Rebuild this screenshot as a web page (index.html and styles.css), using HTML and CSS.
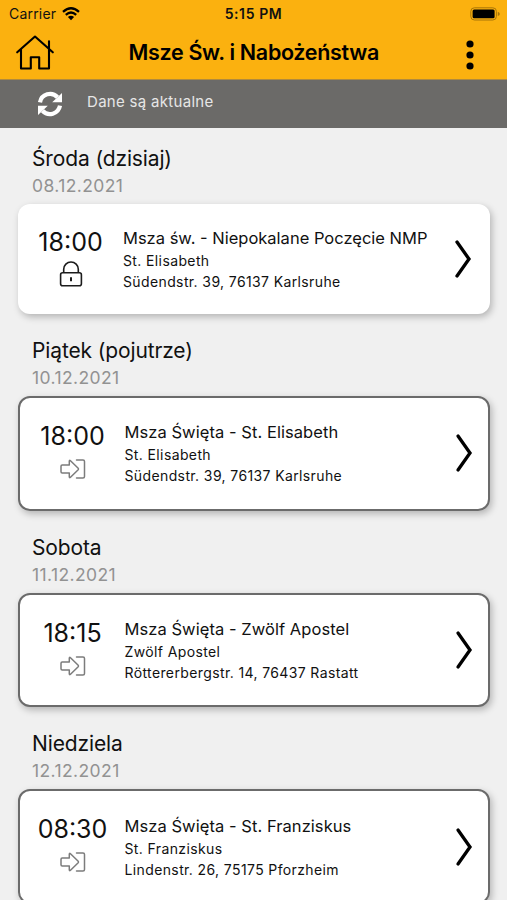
FILE: index.html
```html
<!DOCTYPE html>
<html lang="pl">

<head>
    <meta charset="UTF-8" />
    <meta name="viewport" content="width=device-width, initial-scale=1.0" />
    <title>Msze Św. i Nabożeństwa</title>
    <link rel="stylesheet" href="styles.css">
</head>

<body>
    <svg width="0" height="0" class="sprite">
        <symbol id="chevron" viewBox="0 0 18 40">
            <path d="M3 3 L15 20 L3 37" fill="none" stroke="#000" stroke-width="3.3" stroke-linecap="round" stroke-linejoin="miter" />
        </symbol>
        <symbol id="enter" viewBox="0 0 26 20">
            <path d="M2.2 6 H9.3 V2.2 Q9.3 .7 10.5 1.8 L18.2 9.3 Q18.8 10 18.2 10.7 L10.5 18.2 Q9.3 19.3 9.3 17.8 V14 H2.2 Q1 14 1 12.8 V7.2 Q1 6 2.2 6 Z M16.5 1 H23 Q24.5 1 24.5 2.5 V17.5 Q24.5 19 23 19 H16.5" fill="none" stroke="#7c7c7c" stroke-width="1.5" stroke-linecap="round" stroke-linejoin="round" />
        </symbol>
    </svg>

    <header>
        <div class="status">
            <div class="carrier">
                <span>Carrier</span>
                <svg width="18" height="14" viewBox="0 0 18 14">
                    <path d="M1 4.8 Q9 -2.2 17 4.8 M3.8 7.8 Q9 3.2 14.2 7.8" fill="none" stroke="#000" stroke-width="2.3" />
                    <path d="M5.9 10 Q9 7.3 12.1 10 L9 13.2 Z" />
                </svg>
            </div>
            <span class="clock">5:15 PM</span>
            <svg class="battery" width="31" height="14" viewBox="0 0 31 14">
                <rect x=".8" y=".8" width="25.6" height="12.2" rx="3.6" fill="none" stroke="#a87508" />
                <rect x="2.6" y="2.6" width="22" height="8.6" rx="1.5" />
                <path d="M27.8 4.7 Q29.8 5.6 29.8 6.9 Q29.8 8.2 27.8 9.1 Z" fill="#a87508" />
            </svg>
        </div>
        <div class="navbar">
            <svg class="home" width="38" height="35" viewBox="0 0 38 35" fill="none" stroke="#000" stroke-width="2.1" stroke-linecap="round" stroke-linejoin="round">
                <path d="M1.2 17.3 L19 1.5 L36.8 17.3 M5 14.5 V33.5 H14.8 V22.3 H23.2 V33.5 H33 V14.5 M33 13 V6.3" />
            </svg>
            <h1>Msze Św. i Nabożeństwa</h1>
            <svg class="menu" width="8" height="30" viewBox="0 0 8 30">
                <circle cx="4" cy="4" r="3.6" />
                <circle cx="4" cy="15" r="3.6" />
                <circle cx="4" cy="26" r="3.6" />
            </svg>
        </div>
    </header>

    <div class="sync">
        <svg width="26" height="26" viewBox="0 0 26 26">
            <path d="M3 11.3 A10.2 10.2 0 0 1 20.5 6.2 M23 14.7 A10.2 10.2 0 0 1 5.5 19.8" fill="none" stroke="#fff" stroke-width="4.2" />
            <path d="M25 2 V11.3 H15.2 Z M1 24 V14.7 H10.8 Z" fill="#fff" />
        </svg>
        <span>Dane są aktualne</span>
    </div>

    <main>
        <section class="day">
            <h2>Środa (dzisiaj)</h2>
            <p class="date">08.12.2021</p>
            <div class="card">
                <div class="time">
                    <span>18:00</span>
                    <svg width="24" height="26" viewBox="0 0 24 26" fill="none" stroke="#1c1c1c" stroke-width="1.6">
                        <path d="M4.7 11.5 V8.3 A7.3 7.3 0 0 1 19.3 8.3 V11.5" />
                        <rect x="1.6" y="11.7" width="20.8" height="13" rx="2" />
                        <path d="M12 16.2 V20.3" stroke-width="2" />
                    </svg>
                </div>
                <div class="info">
                    <h3>Msza św. - Niepokalane Poczęcie NMP</h3>
                    <p>St. Elisabeth</p>
                    <p>Südendstr. 39, 76137 Karlsruhe</p>
                </div>
                <svg class="arrow"><use href="#chevron" /></svg>
            </div>
        </section>

        <section class="day">
            <h2>Piątek (pojutrze)</h2>
            <p class="date">10.12.2021</p>
            <div class="card outlined">
                <div class="time">
                    <span>18:00</span>
                    <svg class="enter"><use href="#enter" /></svg>
                </div>
                <div class="info">
                    <h3>Msza Święta - St. Elisabeth</h3>
                    <p>St. Elisabeth</p>
                    <p>Südendstr. 39, 76137 Karlsruhe</p>
                </div>
                <svg class="arrow"><use href="#chevron" /></svg>
            </div>
        </section>

        <section class="day">
            <h2>Sobota</h2>
            <p class="date">11.12.2021</p>
            <div class="card outlined">
                <div class="time">
                    <span>18:15</span>
                    <svg class="enter"><use href="#enter" /></svg>
                </div>
                <div class="info">
                    <h3>Msza Święta - Zwölf Apostel</h3>
                    <p>Zwölf Apostel</p>
                    <p>Röttererbergstr. 14, 76437 Rastatt</p>
                </div>
                <svg class="arrow"><use href="#chevron" /></svg>
            </div>
        </section>

        <section class="day">
            <h2>Niedziela</h2>
            <p class="date">12.12.2021</p>
            <div class="card outlined">
                <div class="time">
                    <span>08:30</span>
                    <svg class="enter"><use href="#enter" /></svg>
                </div>
                <div class="info">
                    <h3>Msza Święta - St. Franziskus</h3>
                    <p>St. Franziskus</p>
                    <p>Lindenstr. 26, 75175 Pforzheim</p>
                </div>
                <svg class="arrow"><use href="#chevron" /></svg>
            </div>
        </section>
    </main>
</body>

</html>
```

FILE: styles.css
```css
* {
    padding: 0;
    margin: 0;
    box-sizing: border-box;
}

body {
    height: 900px;
    overflow: hidden;
    display: flex;
    flex-direction: column;
    background-color: #f0f0f0;
    font-family: Inter, "Liberation Sans", sans-serif;
    color: #111;
}

svg {
    display: block;
    flex-shrink: 0;
}

.sprite {
    position: absolute;
}

header {
    height: 80px;
    flex-shrink: 0;
    background-color: #fbb10f;
    border-bottom: 1px solid #b08a3c;
}

.status {
    height: 27px;
    padding: 0 6px 0 9px;
    display: grid;
    grid-template-columns: 1fr auto 1fr;
    align-items: center;
    font-size: 14px;
}

.carrier {
    display: flex;
    align-items: center;
    gap: 6px;
    letter-spacing: 0.2px;
}

.clock {
    margin-right: 3px;
    font-weight: 600;
    font-size: 14px;
    letter-spacing: 0.6px;
}

.battery {
    justify-self: end;
}

.navbar {
    height: 51px;
    padding: 0 33px 0 16px;
    display: flex;
    align-items: center;
}

.navbar h1 {
    flex: 1;
    margin-top: -2px;
    padding-left: 74.5px;
    font-size: 21.5px;
    font-weight: 600;
    letter-spacing: -0.32px;
    color: #000;
}

.menu {
    margin-top: 5px;
}

.sync {
    height: 48px;
    flex-shrink: 0;
    padding: 0 37px;
    display: flex;
    align-items: center;
    gap: 24px;
    background-color: #6b6a68;
    color: #e6e6e6;
    font-size: 15px;
}

.sync span {
    margin-top: -5px;
    letter-spacing: 0.3px;
}

main {
    padding: 17px 17px 0 18px;
    display: flex;
    flex-direction: column;
    gap: 23px;
}

.day h2 {
    padding-left: 14px;
    font-size: 21px;
    font-weight: 400;
    line-height: 28px;
    letter-spacing: -0.13px;
}

.date {
    height: 31px;
    padding-left: 14px;
    font-size: 17.5px;
    line-height: 26px;
    letter-spacing: 0.4px;
    color: #929292;
}

.card {
    height: 110px;
    padding: 0 18px;
    display: flex;
    align-items: center;
    background-color: white;
    border-radius: 12px;
    box-shadow: 2px 3px 7px rgba(0, 0, 0, 0.25);
}

.outlined {
    height: 114.7px;
    padding-right: 15px;
    border: 2px solid #6b6b6b;
}

.time {
    width: 69px;
    margin-top: -6px;
    display: flex;
    flex-direction: column;
    align-items: center;
    gap: 3px;
    font-size: 25px;
    line-height: 32px;
}

.enter {
    width: 26px;
    height: 20px;
    margin: 4px 0 2px;
}

.info {
    flex: 1;
    padding-left: 18px;
}

.outlined .info {
    padding-left: 17.5px;
}

.info h3 {
    font-size: 16.5px;
    font-weight: 400;
    line-height: 24px;
    white-space: nowrap;
}

.outlined h3 {
    letter-spacing: 0.06px;
}

.info p {
    font-size: 14px;
    line-height: 21px;
    letter-spacing: 0.38px;
}

.arrow {
    width: 18px;
    height: 40px;
}
```
